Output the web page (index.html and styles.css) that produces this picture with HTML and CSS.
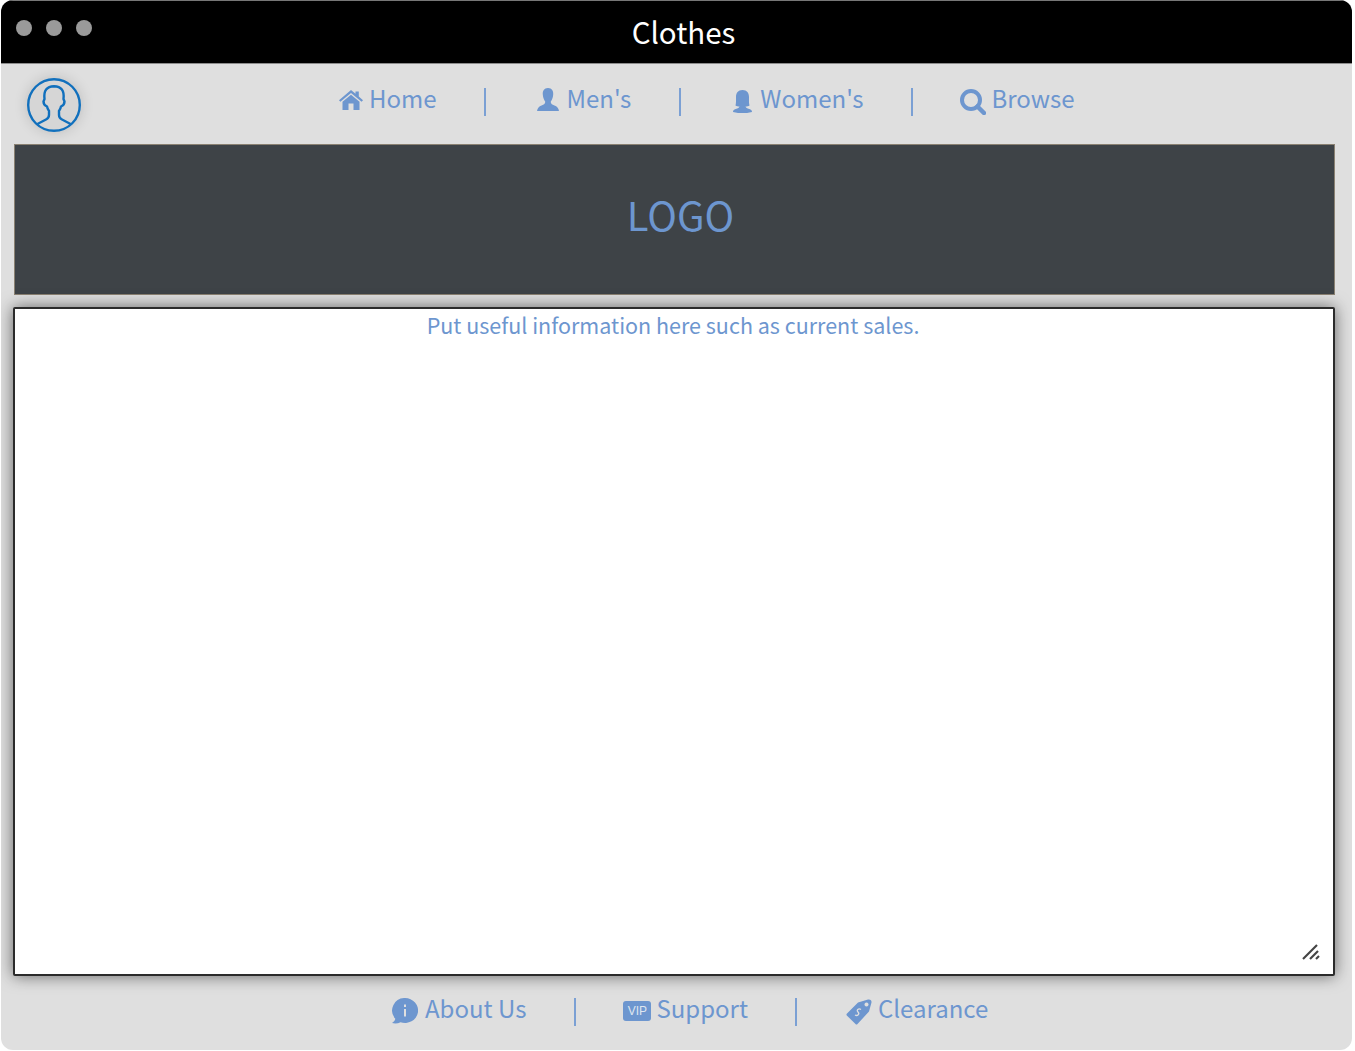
FILE: index.html
```html
<!DOCTYPE html>
<html lang="en">
<head>
    <meta charset="UTF-8">
    <meta name="viewport" content="width=device-width, initial-scale=1.0">
    <title>Clothes</title>
    <link rel="stylesheet" href="styles.css">
</head>
<body>
    <div class="window">
        <header class="titlebar">
            <div class="dots">
                <span class="dot"></span>
                <span class="dot"></span>
                <span class="dot"></span>
            </div>
            <h1 class="title">Clothes</h1>
        </header>

        <div class="topbar">
            <a class="avatar" href="#" aria-label="Account">
                <svg viewBox="0 0 54 54" width="54" height="54" fill="none" stroke="#1170bd" stroke-width="2.400">
                    <circle cx="27" cy="27" r="25.800"/>
                    <path d="M9.500 46.500 L19 41.500 Q22 40 22 37 L22 33 Q20.500 31 20 28.500 Q16.500 27 16.500 23.500 L17.500 21 Q16 8.500 27 8.200 Q38 8.500 36.500 21 L37.500 23.500 Q37.500 27 34 28.500 Q33.500 31 32 33 L32 37 Q32 40 35 41.500 L44.500 46.500"/>
                </svg>
            </a>
            <nav class="nav">
                <a class="link link-home" href="#">
                    <svg class="icon" viewBox="0 0 24 20" width="24" height="20"><path d="M12 0 L16.500 3.800 L16.500 1.500 L19.800 1.500 L19.800 6.600 L24 10.200 L22.600 11.800 L12 3 L1.400 11.800 L0 10.200 Z M3.500 11.800 L12 4.800 L20.500 11.800 L20.500 20 L14.500 20 L14.500 13.500 L9.500 13.500 L9.500 20 L3.500 20 Z"/></svg>
                    Home
                </a>
                <span class="sep"></span>
                <a class="link link-mens" href="#">
                    <svg class="icon" viewBox="0 0 22 23" width="22" height="23"><path d="M11 0 C15 0 16.500 3 16.200 6.500 C16 9.500 15 12 13.800 13.500 C13.500 15.500 15 16.500 17.500 17.500 C20 18.500 21.500 20 22 23 L0 23 C0.500 20 2 18.500 4.500 17.500 C7 16.500 8.500 15.500 8.200 13.500 C7 12 6 9.500 5.800 6.500 C5.500 3 7 0 11 0 Z"/></svg>
                    Men's
                </a>
                <span class="sep"></span>
                <a class="link link-womens" href="#">
                    <svg class="icon" viewBox="0 0 19 23" width="19" height="23"><path d="M9.500 0 C14 0 16 3 16 7 C16 10.500 15.800 13 16.500 15.500 C15.500 16.200 14 16.500 12.500 16.500 C12.800 18 15 18.500 17 19.300 C18.200 19.800 19 20.800 19 22 C15.500 23 12.500 23 9.500 23 C6.500 23 3.500 23 0 22 C0 20.800 0.800 19.800 2 19.300 C4 18.500 6.200 18 6.500 16.500 C5 16.500 3.500 16.200 2.500 15.500 C3.200 13 3 10.500 3 7 C3 3 5 0 9.500 0 Z"/></svg>
                    Women's
                </a>
                <span class="sep"></span>
                <a class="link link-browse" href="#">
                    <svg class="icon icon-search" viewBox="0 0 26 26" width="26" height="26" fill="none"><circle cx="11" cy="11" r="9" stroke-width="4"/><path d="M17.500 17.500 L24 24" stroke-width="4.500" stroke-linecap="round"/></svg>
                    Browse
                </a>
            </nav>
        </div>

        <div class="banner">
            <span class="logo">LOGO</span>
        </div>

        <main class="content">
            <p class="info">Put useful information here such as current sales.</p>
            <svg class="grip" viewBox="0 0 18 18" width="18" height="18" fill="none" stroke="#444" stroke-width="2.200">
                <path d="M1 16 L15 2"/>
                <path d="M8 16 L16 8"/>
                <path d="M14 16 L17 13"/>
            </svg>
        </main>

        <footer class="footer">
            <a class="link link-about" href="#">
                <svg class="icon" viewBox="0 0 27 26" width="27" height="26"><path fill-rule="evenodd" d="M14 0 A13 12.500 0 1 1 9.500 24.200 C7 25.500 4 25.800 1 25 C3 23.800 4 22.500 4.300 20.800 A12.500 12.500 0 0 1 14 0 Z M13 6.500 L13 9 L15 9 L15 6.500 Z M13 11 L13 18.500 L15 18.500 L15 11 Z"/></svg>
                About Us
            </a>
            <span class="sep"></span>
            <a class="link link-support" href="#">
                <span class="vip">VIP</span>
                Support
            </a>
            <span class="sep"></span>
            <a class="link link-clear" href="#">
                <svg class="icon" viewBox="0 0 26 26" width="26" height="26"><path fill-rule="evenodd" d="M12 3.500 L22 0.500 Q25.800 0 25.500 3.500 L23 12.500 L11.500 25 Q10.500 26 9.500 25 L0.800 16.500 Q0 15.500 1 14.500 Z M20.500 3.500 A2 2 0 1 0 20.501 3.500 Z"/><path d="M15 10.500 C12.500 9 10 11 12 13 C14 15 11.500 17.500 9 16" fill="none" stroke="#dfdfdf" stroke-width="1.300"/></svg>
                Clearance
            </a>
        </footer>
    </div>
</body>
</html>
```

FILE: styles.css
```css
* {
    box-sizing: border-box;
}
body {
    margin: 0;
    background-color: #FFFFFF;
    font-family: "Noto Sans CJK SC", "Open Sans", sans-serif;
    overflow: hidden;
}
a {
    text-decoration: none;
}
.window {
    width: 1351px;
    height: 1050px;
    margin-left: 1px;
    display: flex;
    flex-direction: column;
    background-color: #DFDFDF;
    border-radius: 12px;
    overflow: hidden;
}
.titlebar {
    height: 64px;
    flex: none;
    display: flex;
    align-items: center;
    justify-content: center;
    position: relative;
    background-color: #000000;
    border-top: 1px solid #777777;
    border-bottom: 1px solid #8c8c8c;
}
.dots {
    position: absolute;
    top: 19px;
    left: 15px;
    display: flex;
    gap: 14px;
}
.dot {
    width: 16px;
    height: 16px;
    border-radius: 50%;
    background-color: #9a9a9a;
}
.title {
    margin: 0 0 2px 14px;
    font-size: 29.500px;
    font-weight: 400;
    line-height: 40px;
    color: #FFFFFF;
}
.topbar {
    height: 80px;
    flex: none;
    display: flex;
    align-items: flex-start;
}
.avatar {
    width: 54px;
    height: 54px;
    margin: 14px 0 0 26px;
    border-radius: 50%;
    background-color: #d6d6d6;
    box-shadow: 0 0 14px rgba(0, 0, 0, 0.16);
    display: block;
}
.nav {
    display: flex;
    align-items: flex-start;
    margin: 16px 0 0 258px;
}
.link {
    display: flex;
    align-items: center;
    gap: 7px;
    font-size: 24px;
    line-height: 36px;
    color: #6d96cf;
    white-space: nowrap;
}
.icon {
    fill: #6d96cf;
    stroke: none;
    flex: none;
}
.icon-search {
    fill: none;
    stroke: #6d96cf;
}
.link-home {
    gap: 6px;
}
.link-home .icon {
    margin-top: 4px;
}
.link-mens {
    gap: 8px;
}
.link-mens .icon {
    margin-top: 2px;
}
.link-womens {
    gap: 8px;
}
.link-womens .icon {
    margin-top: 7px;
}
.link-browse {
    gap: 6px;
}
.link-browse .icon {
    margin-top: 8px;
}
.sep {
    width: 2px;
    height: 28px;
    margin-top: 8px;
    background-color: #7ba0d4;
    flex: none;
}
.nav .sep:nth-of-type(1) {
    margin-left: 47px;
    margin-right: 51px;
}
.nav .sep:nth-of-type(2) {
    margin-left: 48px;
    margin-right: 52px;
}
.nav .sep:nth-of-type(3) {
    margin-left: 47px;
    margin-right: 47px;
}
.banner {
    height: 151px;
    flex: none;
    margin: 0 17px 0 13px;
    display: flex;
    align-items: center;
    justify-content: center;
    background-color: #3e4347;
    border: 1px solid #8a8172;
}
.logo {
    margin: 0 0 12px 12px;
    font-size: 40px;
    line-height: 60px;
    color: #6d96cf;
}
.content {
    height: 669px;
    flex: none;
    margin: 12px 17px 0 12px;
    position: relative;
    background-color: #FFFFFF;
    border: 2px solid #2b2b2b;
    border-radius: 2px;
    box-shadow: 0 0 16px rgba(0, 0, 0, 0.55);
}
.info {
    margin: 0;
    padding: 0 2px 0 0;
    text-align: center;
    font-size: 21.500px;
    line-height: 32px;
    color: #6d96cf;
}
.grip {
    position: absolute;
    right: 13px;
    bottom: 13px;
}
.footer {
    flex: 1;
    display: flex;
    align-items: flex-start;
    padding: 14px 0 0 390px;
}
.footer .sep:nth-of-type(1) {
    margin-left: 48px;
    margin-right: 47px;
}
.footer .sep:nth-of-type(2) {
    margin-left: 47px;
    margin-right: 49px;
}
.link-about .icon {
    margin-top: 6px;
}
.link-support {
    gap: 5px;
}
.link-clear {
    gap: 6px;
}
.link-clear .icon {
    margin-top: 8px;
}
.vip {
    width: 28px;
    height: 20px;
    margin-top: 6px;
    border-radius: 3px;
    background-color: #6d96cf;
    color: #dfe6f0;
    font-family: "Liberation Sans", sans-serif;
    font-size: 12px;
    line-height: 20px;
    text-align: center;
}
```
